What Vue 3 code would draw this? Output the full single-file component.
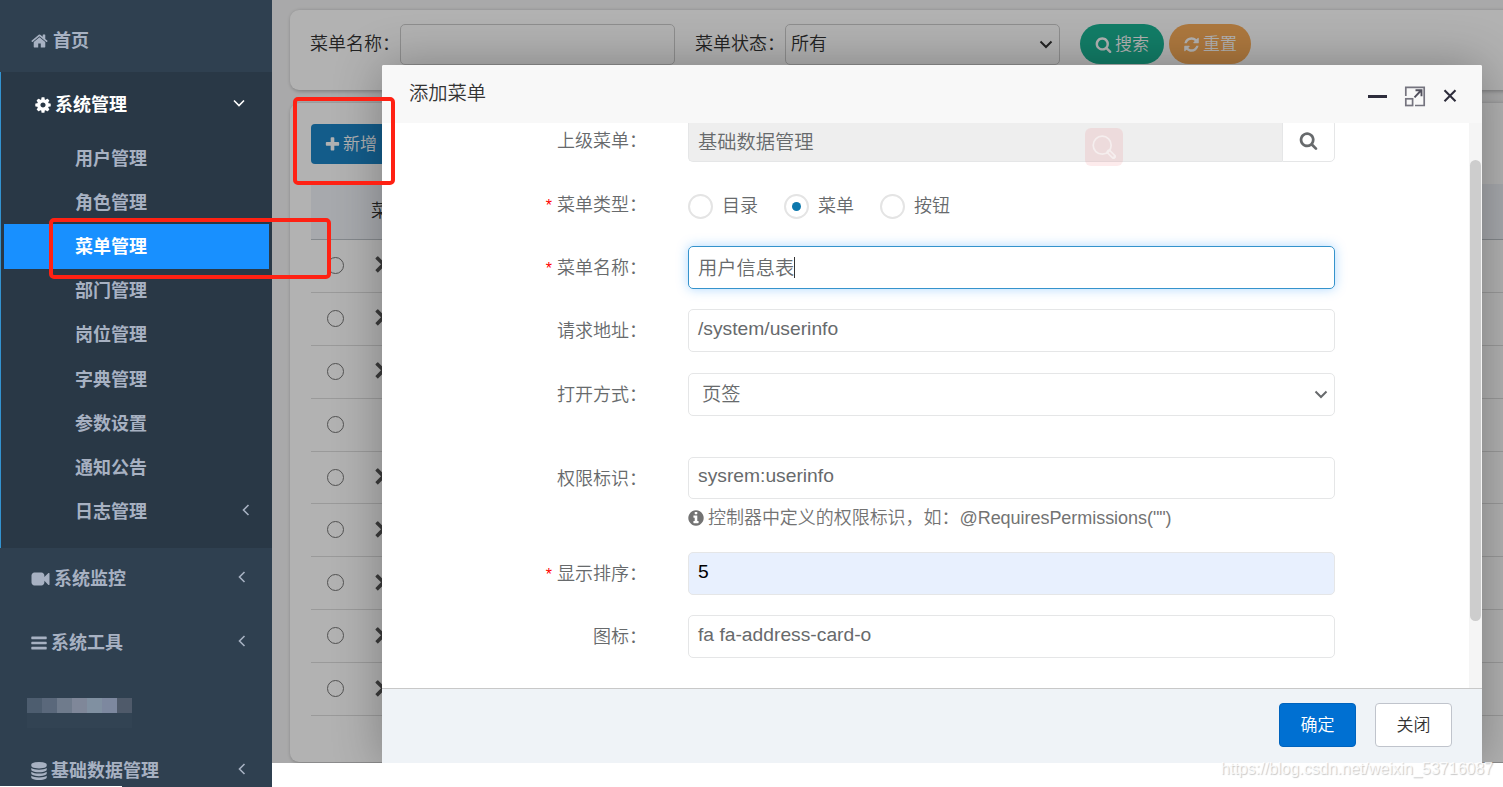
<template>
  <div class="page">
    <aside class="sidebar">
      <div class="nav-row nav-home">
        <svg class="fa" width="17" height="18" viewBox="48 0 1696 1792"><path :d="icons.home" /></svg>
        <span>首页</span>
      </div>
      <div class="nav-group">
        <div class="nav-row nav-open">
          <svg class="fa" width="16" height="18" viewBox="128 0 1536 1792"><path :d="icons.gear" /></svg>
          <span>系统管理</span>
          <svg class="arrow" width="12" height="8" viewBox="0 0 12 8"><path d="M1 1.5l5 5 5-5" /></svg>
        </div>
        <ul class="sub-menu">
          <li v-for="item in subMenu" :key="item" :class="{ active: item === current }">
            <span>{{ item }}</span>
            <svg v-if="item === '日志管理'" class="arrow" width="8" height="12" viewBox="0 0 8 12"><path d="M6.5 1l-5 5 5 5" /></svg>
          </li>
        </ul>
      </div>
      <div class="nav-row">
        <svg class="fa" width="19" height="18" viewBox="0 0 1792 1792"><path :d="icons.video" /></svg>
        <span>系统监控</span>
        <svg class="arrow" width="8" height="12" viewBox="0 0 8 12"><path d="M6.5 1l-5 5 5 5" /></svg>
      </div>
      <div class="nav-row">
        <svg class="fa" width="16" height="18" viewBox="128 0 1536 1792"><path :d="icons.bars" /></svg>
        <span>系统工具</span>
        <svg class="arrow" width="8" height="12" viewBox="0 0 8 12"><path d="M6.5 1l-5 5 5 5" /></svg>
      </div>
      <div class="nav-row nav-mosaic">
        <i v-for="(c, i) in mosaic" :key="i" :style="{ background: c }"></i>
      </div>
      <div class="nav-row">
        <svg class="fa" width="16" height="18" viewBox="128 0 1536 1792"><path :d="icons.database" /></svg>
        <span>基础数据管理</span>
        <svg class="arrow" width="8" height="12" viewBox="0 0 8 12"><path d="M6.5 1l-5 5 5 5" /></svg>
      </div>
      <div class="status-line"></div>
    </aside>

    <main class="main">
      <div class="card search-card">
        <label>菜单名称：</label>
        <div class="search-input"></div>
        <label class="label-status">菜单状态：</label>
        <div class="search-input search-select">
          <span>所有</span>
          <svg class="caret" width="14" height="9" viewBox="0 0 14 9"><path d="M1.5 1.5l5.5 5.5 5.5-5.5" /></svg>
        </div>
        <button class="pill pill-search">
          <svg class="fa" width="17" height="17" viewBox="0 0 1792 1792"><path :d="icons.search" /></svg><span>搜索</span>
        </button>
        <button class="pill pill-reset">
          <svg class="fa" width="17" height="17" viewBox="0 0 1792 1792"><path :d="icons.refresh" /></svg><span>重置</span>
        </button>
      </div>
      <div class="card table-card">
        <button class="btn-add">
          <svg class="fa" width="17" height="17" viewBox="0 0 1792 1792"><path :d="icons.plus" /></svg><span>新增</span>
        </button>
        <div class="table-head">菜单名称</div>
        <div v-for="n in 9" :key="n" class="table-row">
          <span class="round"></span>
          <svg v-if="n !== 4" class="fa" width="18" height="18" viewBox="0 0 1792 1792"><path :d="icons.chevron" /></svg>
        </div>
      </div>
      <div class="shade"></div>

      <section class="modal">
        <header class="modal-head">
          <span class="modal-title">添加菜单</span>
          <svg class="win-icons" width="92" height="22" viewBox="0 0 92 22">
            <path d="M1 11.5h19" stroke="#2e2d3c" stroke-width="3" />
            <g fill="none" stroke="#75747f" stroke-width="1.7">
              <path d="M38.8 11V2.3h18.4v18.2H48" />
              <rect x="38.8" y="13.8" width="6.8" height="6.7" />
            </g>
            <path d="M47.5 12.3l6-6.3M48.5 5.2h6v6" fill="none" stroke="#52515e" stroke-width="1.9" />
            <path d="M77.5 5.3l11 11M88.5 5.3l-11 11" stroke="#2e2d3c" stroke-width="2.1" />
          </svg>
        </header>
        <div class="modal-body">
          <div class="form">
            <div class="form-row">
              <label>上级菜单：</label>
              <div class="group">
                <div class="control readonly">基础数据管理</div>
                <div class="addon">
                  <svg class="fa" width="19" height="19" viewBox="0 0 1792 1792"><path :d="icons.search" /></svg>
                </div>
              </div>
            </div>
            <div class="form-row">
              <label><em>*</em>菜单类型：</label>
              <div class="radios">
                <span v-for="t in types" :key="t" class="radio" :class="{ checked: t === type }"><i></i>{{ t }}</span>
              </div>
            </div>
            <div class="form-row">
              <label><em>*</em>菜单名称：</label>
              <div class="control focus">用户信息表<b></b></div>
            </div>
            <div class="form-row">
              <label>请求地址：</label>
              <div class="control latin">/system/userinfo</div>
            </div>
            <div class="form-row">
              <label>打开方式：</label>
              <div class="control select">
                <span>页签</span>
                <svg class="caret" width="14" height="9" viewBox="0 0 14 9"><path d="M1.5 1.5l5.5 5.5 5.5-5.5" /></svg>
              </div>
            </div>
            <div class="form-row row-perm">
              <label>权限标识：</label>
              <div class="control latin">sysrem:userinfo</div>
            </div>
            <div class="help">
              <svg class="fa" width="16" height="18" viewBox="128 0 1536 1792"><path :d="icons.info" /></svg>
              <span>控制器中定义的权限标识，如：@RequiresPermissions("")</span>
            </div>
            <div class="form-row">
              <label><em>*</em>显示排序：</label>
              <div class="control latin autofill">5</div>
            </div>
            <div class="form-row">
              <label>图标：</label>
              <div class="control latin">fa fa-address-card-o</div>
            </div>
          </div>
          <div class="scrollbar"><div class="thumb"></div></div>
          <div class="float-search">
            <svg width="24" height="24" viewBox="0 0 24 24">
              <circle cx="10.2" cy="10.2" r="9" />
              <path d="M17 17l4.5 4.5" class="handle" />
              <path d="M17.6 17.6l3.4 3.4" class="handle-in" />
            </svg>
          </div>
        </div>
        <footer class="modal-foot">
          <button class="btn btn-ok">确定</button>
          <button class="btn">关闭</button>
        </footer>
      </section>
    </main>

    <div class="mark mark-menu"></div>
    <div class="mark mark-add"></div>
    <div class="watermark">https://blog.csdn.net/weixin_53716087</div>
  </div>
</template>

<script setup>
import { ref } from 'vue'

const current = ref('菜单管理')
const type = ref('菜单')
const types = ['目录', '菜单', '按钮']
const subMenu = ['用户管理', '角色管理', '菜单管理', '部门管理', '岗位管理', '字典管理', '参数设置', '通知公告', '日志管理']
const mosaic = ['#4d5d6f', '#5a687b', '#6f7b8c', '#7f8799', '#8090a1', '#7d889f', '#4f5a6a']

const icons = {
  home: 'M1472 992v480q0 26-19 45t-45 19h-384v-384h-256v384h-384q-26 0-45-19t-19-45v-480q0-1 .5-3t.5-3l575-474 575 474q1 2 1 6zm223-69l-62 74q-8 9-21 11h-3q-13 0-21-7l-692-577-692 577q-12 8-24 7-13-2-21-11l-62-74q-8-10-7-23.5t11-21.5l719-599q32-26 76-26t76 26l244 204v-195q0-14 9-23t23-9h192q14 0 23 9t9 23v408l219 182q10 8 11 21.5t-7 23.5z',
  gear: 'M1152 896q0-106-75-181t-181-75-181 75-75 181 75 181 181 75 181-75 75-181zm512-109v222q0 12-8 23t-20 13l-185 28q-19 54-39 91 35 50 107 138 10 12 10 25t-9 23q-27 37-99 108t-94 71q-12 0-26-9l-138-108q-44 23-91 38-16 136-29 186-7 28-36 28h-222q-14 0-24.5-8.5t-11.5-21.5l-28-184q-49-16-90-37l-141 107q-10 9-25 9-14 0-25-11-126-114-165-168-7-10-7-23 0-12 8-23 15-21 51-66.5t54-70.5q-27-50-41-99l-183-27q-13-2-21-12.5t-8-23.5v-222q0-12 8-23t19-13l186-28q14-46 39-92-40-57-107-138-10-12-10-24 0-10 9-23 26-36 98.5-107.5t94.5-71.5q13 0 26 10l138 107q44-23 91-38 16-136 29-186 7-28 36-28h222q14 0 24.5 8.5t11.5 21.5l28 184q49 16 90 37l142-107q9-9 24-9 13 0 25 10 129 119 165 170 7 8 7 22 0 12-8 23-15 21-51 66.5t-54 70.5q26 50 41 98l183 28q13 2 21 12.5t8 23.5z',
  video: 'M1792 352v1088q0 42-39 59-13 5-25 5-27 0-45-19l-403-403v166q0 119-84.5 203.5t-203.5 84.5h-704q-119 0-203.5-84.5t-84.5-203.5v-704q0-119 84.5-203.5t203.5-84.5h704q119 0 203.5 84.5t84.5 203.5v165l403-402q18-19 45-19 12 0 25 5 39 17 39 59z',
  bars: 'M1664 1344v128q0 26-19 45t-45 19h-1408q-26 0-45-19t-19-45v-128q0-26 19-45t45-19h1408q26 0 45 19t19 45zm0-512v128q0 26-19 45t-45 19h-1408q-26 0-45-19t-19-45v-128q0-26 19-45t45-19h1408q26 0 45 19t19 45zm0-512v128q0 26-19 45t-45 19h-1408q-26 0-45-19t-19-45v-128q0-26 19-45t45-19h1408q26 0 45 19t19 45z',
  database: 'M896 768q237 0 443-43t325-127v170q0 69-103 128t-280 93.5-385 34.5-385-34.5-280-93.5-103-128v-170q119 84 325 127t443 43zm0 768q237 0 443-43t325-127v170q0 69-103 128t-280 93.5-385 34.5-385-34.5-280-93.5-103-128v-170q119 84 325 127t443 43zm0-384q237 0 443-43t325-127v170q0 69-103 128t-280 93.5-385 34.5-385-34.5-280-93.5-103-128v-170q119 84 325 127t443 43zm0-1152q208 0 385 34.5t280 93.5 103 128v128q0 69-103 128t-280 93.5-385 34.5-385-34.5-280-93.5-103-128v-128q0-69 103-128t280-93.5 385-34.5z',
  search: 'M1216 832q0-185-131.5-316.5t-316.5-131.5-316.5 131.5-131.5 316.5 131.5 316.5 316.5 131.5 316.5-131.5 131.5-316.5zm512 832q0 52-38 90t-90 38q-54 0-90-38l-343-342q-179 124-399 124-143 0-273.5-55.5t-225-150-150-225-55.5-273.5 55.5-273.5 150-225 225-150 273.5-55.5 273.5 55.5 225 150 150 225 55.5 273.5q0 220-124 399l343 343q37 37 37 90z',
  refresh: 'M1639 1056q0 5-1 7-64 268-268 434.5t-478 166.5q-146 0-282.5-55t-243.5-157l-129 129q-19 19-45 19t-45-19-19-45v-448q0-26 19-45t45-19h448q26 0 45 19t19 45-19 45l-137 137q71 66 161 102t187 36q134 0 250-65t186-179q11-17 53-117 8-23 30-23h192q13 0 22.5 9.5t9.5 22.5zm25-800v448q0 26-19 45t-45 19h-448q-26 0-45-19t-19-45 19-45l138-138q-148-137-349-137-134 0-250 65t-186 179q-11 17-53 117-8 23-30 23h-199q-13 0-22.5-9.5t-9.5-22.5v-7q65-268 270-434.5t480-166.5q146 0 284 55.5t245 156.5l130-129q19-19 45-19t45 19 19 45z',
  plus: 'M1600 736v192q0 40-28 68t-68 28h-416v416q0 40-28 68t-68 28h-192q-40 0-68-28t-28-68v-416h-416q-40 0-68-28t-28-68v-192q0-40 28-68t68-28h416v-416q0-40 28-68t68-28h192q40 0 68 28t28 68v416h416q40 0 68 28t28 68z',
  chevron: 'M1363 877l-742 742q-19 19-45 19t-45-19l-166-166q-19-19-19-45t19-45l531-531-531-531q-19-19-19-45t19-45l166-166q19-19 45-19t45 19l742 742q19 19 19 45t-19 45z',
  info: 'M1152 1376v-160q0-14-9-23t-23-9h-96v-512q0-14-9-23t-23-9h-320q-14 0-23 9t-9 23v160q0 14 9 23t23 9h96v320h-96q-14 0-23 9t-9 23v160q0 14 9 23t23 9h448q14 0 23-9t9-23zm-128-896v-160q0-14-9-23t-23-9h-192q-14 0-23 9t-9 23v160q0 14 9 23t23 9h192q14 0 23-9t9-23zm640 416q0 209-103 385.5t-279.5 279.5-385.5 103-385.5-103-279.5-279.5-103-385.5 103-385.5 279.5-279.5 385.5-103 385.5 103 279.5 279.5 103 385.5z'
}
</script>

<style>
body { background: #fff; overflow: hidden; }
</style>

<style scoped>
* { box-sizing: border-box; }
.page { position: relative; display: flex; align-items: flex-start; width: 1503px; height: 787px; overflow: hidden; font-family: "Liberation Sans", "Noto Sans CJK SC", sans-serif; font-size: 18px; font-weight: 350; color: #676a6c; }
.fa { fill: currentColor; flex: none; overflow: visible; }
button { font-family: inherit; font-weight: inherit; padding: 0; border: none; }

/* sidebar */
.sidebar { display: flex; flex-direction: column; flex: none; width: 272px; height: 787px; background: #2f4050; color: #a7b1c2; font-weight: 700; overflow: hidden; position: relative; }
.nav-row { display: flex; align-items: center; flex: none; gap: 4px; height: 64px; padding: 0 26px 3px 31px; line-height: 26px; }
.nav-row .arrow { margin-bottom: 3px; }
.nav-home { height: 72px; padding-top: 12px; gap: 5px; }
.nav-group { flex: none; height: 476px; background: #293846; border-left: 1px solid #3393d0; }
.nav-open { color: #fff; padding: 2px 27px 0 34px; }
.arrow { margin-left: auto; fill: none; stroke: currentColor; stroke-width: 1.6; }
.nav-open .arrow { margin-bottom: 5px; }
.sub-menu { list-style: none; margin: 0; padding: 0 3px; }
.sub-menu li { display: flex; align-items: center; height: 44.2px; padding: 1px 19px 0 71px; line-height: 26px; }
.sub-menu .arrow { margin-bottom: 4px; }
.sub-menu li.active { background: #1890ff; color: #fff; }
.nav-mosaic { gap: 0; padding: 0 0 5px 27px; }
.nav-mosaic i { width: 15px; height: 15px; box-shadow: 0 15px 0 #324353; }
.status-line { position: absolute; left: 0; bottom: 0; width: 122px; height: 1px; background: #fff; }

/* page behind the dialog */
.main { position: relative; flex: 1; height: 763px; padding: 10px 0 0 18px; background: #f3f3f4; overflow: hidden; }
.card { width: 1250px; background: #fff; border-radius: 9px; box-shadow: 1px 1px 4px rgba(0, 0, 0, .3); }
.search-card { display: flex; align-items: flex-start; height: 80px; padding: 14px 0 0 20px; color: #333; line-height: 41px; }
.search-card label { width: 90px; white-space: nowrap; }
.search-card .label-status { margin-left: 20px; }
.search-input { display: flex; align-items: center; width: 275px; height: 41px; border: 1px solid #ccc; border-radius: 5px; }
.search-select { justify-content: space-between; padding: 0 6px 1px 5px; }
.caret { fill: none; stroke: currentColor; stroke-width: 2; }
.pill { display: flex; align-items: center; justify-content: center; gap: 3px; width: 84px; height: 40px; margin-left: 20px; border-radius: 20px; color: #fff; font-size: 17px; background: #1ab394; }
.pill span, .btn-add span { padding-bottom: 3px; }
.pill-reset { width: 82px; margin-left: 5px; background: #f8ac59; }
.table-card { height: 659px; margin-top: 13px; padding: 21px 0 0 21px; }
.btn-add { display: flex; align-items: center; gap: 2px; width: 86px; height: 40px; padding-left: 13px; border-radius: 4px; background: #1c84c6; color: #fff; font-size: 17px; }
.table-head { height: 56px; margin-top: 20px; padding-left: 60px; line-height: 55px; background: #eff3f8; border-bottom: 1px solid #bdc3c9; color: #333; }
.table-row { display: flex; align-items: center; height: 52.9px; padding-bottom: 1px; border-bottom: 1px solid #ddd; color: #555; }
.round { width: 17px; height: 17px; margin-left: 16px; border: 1.4px solid #767676; border-radius: 50%; }
.table-row .fa { margin-left: 28px; }
.shade { position: absolute; inset: 0; background: rgba(0, 0, 0, .3); }

/* dialog */
.modal { position: absolute; left: 110px; top: 65px; display: flex; flex-direction: column; width: 1100px; height: 699px; background: #fff; border-radius: 2px 2px 0 0; box-shadow: 1px 1px 50px rgba(0, 0, 0, .3); }
.modal-head { display: flex; align-items: center; justify-content: space-between; flex: none; height: 58px; padding: 0 23px 0 27px; background: #f8f8f8; color: #333; font-size: 19.3px; border-radius: 2px 2px 0 0; }
.modal-title { line-height: 28px; }
.win-icons { margin-top: 4px; }
.modal-body { position: relative; display: flex; flex: none; height: 565px; overflow: hidden; }
.form { flex: 1; margin-top: -3.6px; }
.form-row { display: flex; height: 42.8px; margin-bottom: 20.55px; }
.form-row label { width: 265px; margin-right: 41px; line-height: 44px; text-align: right; white-space: nowrap; }
.form-row em { color: #f00; font-style: normal; margin-right: 5px; font-size: 16px; }
.control { display: flex; align-items: center; width: 647px; height: 100%; padding: 0 9px; border: 1px solid #e5e6e7; border-radius: 5px; font-size: 19.25px; }
.control.latin { padding-bottom: 3px; }
.group { display: flex; width: 647px; }
.readonly { flex: 1; background: #eee; border-right: none; border-radius: 5px 0 0 5px; }
.addon { display: flex; align-items: center; justify-content: center; width: 53px; padding-bottom: 1px; border: 1px solid #e5e6e7; border-radius: 0 5px 5px 0; }
.focus { border-color: #3593cc; box-shadow: 0 0 12px rgba(24, 144, 255, .35); }
.focus b { width: 1px; height: 21px; background: #333; }
.select { justify-content: space-between; padding: 0 6px 2px 13px; }
.select .caret { margin-top: 3px; }
.autofill { background: #e8f0fe; color: #000; }
.control.autofill { padding-bottom: 2px; }
.radios { display: flex; align-items: center; padding-top: 4px; }
.radio { display: flex; align-items: center; width: 96px; line-height: 26px; }
.radio i { display: flex; align-items: center; justify-content: center; width: 25px; height: 25px; margin-right: 9px; border: 2px solid #e4e4e4; border-radius: 50%; }
.radio.checked i::after { content: ""; width: 9px; height: 9px; border-radius: 50%; background: #0d78ad; }
.row-perm { margin: 41px 0 0; }
.help { display: flex; align-items: center; gap: 4px; height: 37px; margin: 0 0 15.6px 306px; color: #737373; white-space: nowrap; }
.help span { padding-bottom: 3px; letter-spacing: -.04px; }
.scrollbar { width: 13px; padding: 37px 1px 0; background: #f5f5f5; }
.thumb { height: 461px; border-radius: 6px; background: #cdcdcd; }
.float-search { position: absolute; left: 703px; top: 5px; display: flex; align-items: center; justify-content: center; width: 38px; height: 38px; border-radius: 6px; background: rgba(240, 60, 70, .1); }
.float-search svg { fill: none; stroke: #f5eeee; stroke-width: 1.7; stroke-linecap: round; }
.float-search .handle { stroke-width: 5; }
.float-search .handle-in { stroke: #efdcdd; stroke-width: 1.6; }
.modal-foot { display: flex; justify-content: flex-end; gap: 19px; flex: none; height: 76px; padding: 14px 30px 0 0; background: #eff3f7; border-top: 1px solid #c8c8c8; border-bottom: 1px solid #e3e6e9; }
.btn { width: 77px; height: 44px; padding-bottom: 3px; border: 1px solid #c0c4cc; border-radius: 4px; background: #fff; color: #333; font-size: 17px; }
.btn-ok { border-color: #0063bd; background: #0070d2; color: #fff; }

/* annotations over the page */
.mark { position: absolute; border: 4px solid #ff2113; border-radius: 5px; }
.mark-menu { left: 49px; top: 218px; width: 282px; height: 61px; }
.mark-add { left: 293px; top: 97px; width: 102px; height: 88px; }
.watermark { position: absolute; right: 10px; bottom: 8px; color: rgba(255, 255, 255, .8); font-size: 16px; font-weight: 400; line-height: 20px; text-shadow: 1px 1px 1px rgba(0, 0, 0, .22); }
</style>
